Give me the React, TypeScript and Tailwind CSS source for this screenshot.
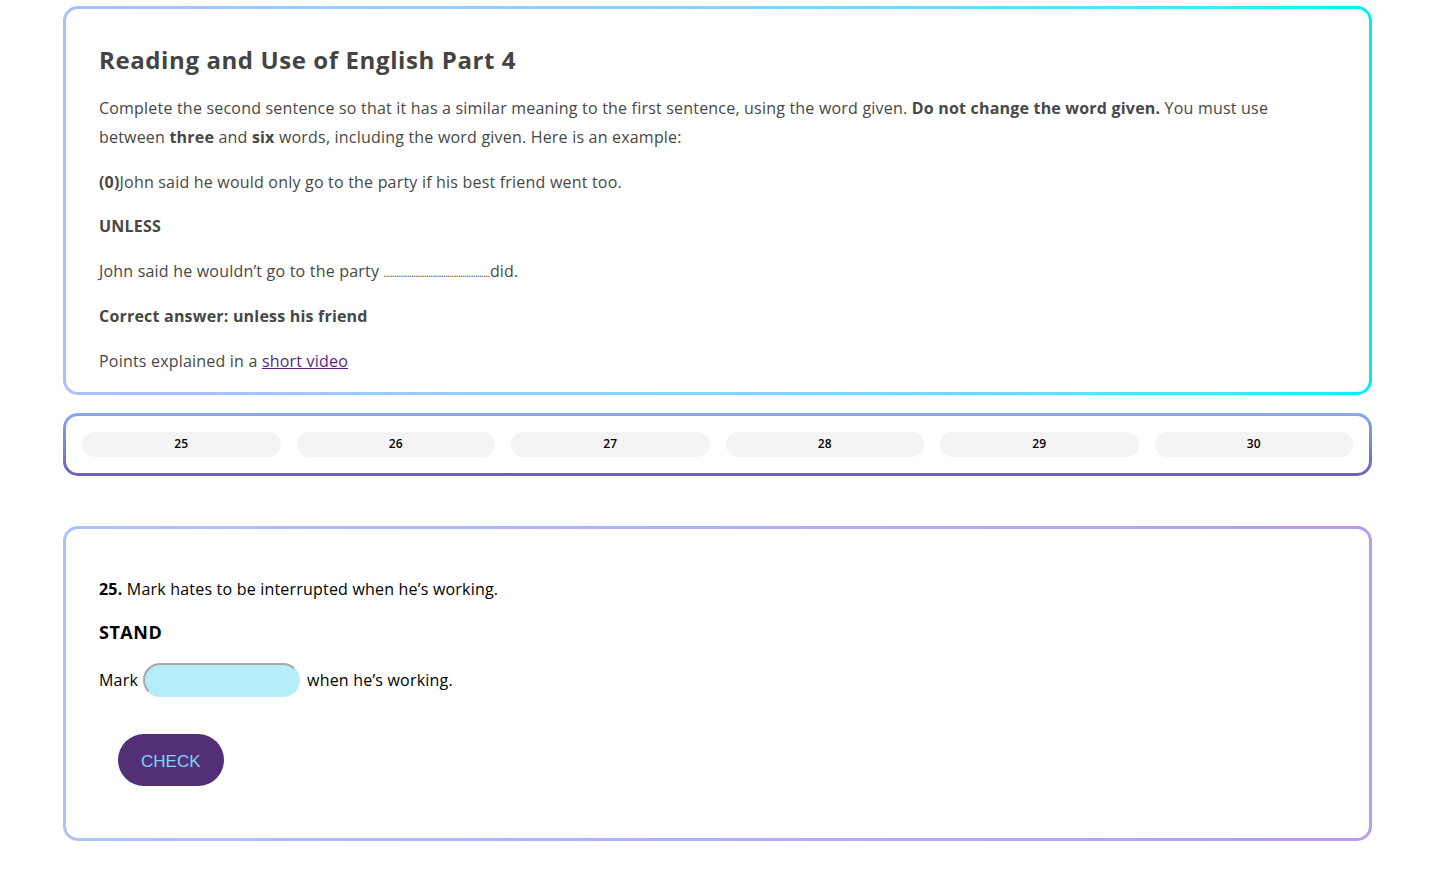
import React from "react";

const font = { fontFamily: '"Open Sans", "Noto Sans", sans-serif' };

export default function App() {
  const nums = [25, 26, 27, 28, 29, 30];
  return (
    <div className="min-h-[880px] bg-white pt-[6px] tracking-[0.2px]" style={font}>
      <div className="ml-[63px] w-[1309px]">
        {/* Box 1 */}
        <div className="rounded-[15px] bg-gradient-to-r from-[#aebffb] to-[#00ebfb] p-[3px]">
          <div className="rounded-[12px] bg-white pl-[33px] pr-[33px] pt-[36px] pb-[16px] text-[#474747]">
            <h2 className="text-[24px] font-bold leading-[29px] tracking-[0.6px] text-[#444444]">
              Reading and Use of English Part 4
            </h2>
            <p className="mt-[20px] text-[16px] leading-[1.8]">
              Complete the second sentence so that it has a similar meaning to the first sentence, using the word given.{" "}
              <b>Do not change the word given.</b> You must use between <b>three</b> and <b>six</b> words, including the word given. Here is an example:
            </p>
            <p className="mt-4 text-[16px] leading-[1.8]">
              <b>(0)</b>John said he would only go to the party if his best friend went too.
            </p>
            <p className="mt-4 text-[16px] leading-[1.8]">
              <b>UNLESS</b>
            </p>
            <p className="mt-4 text-[16px] leading-[1.8]">
              John said he wouldn’t go to the party{" "}
              <span className="text-[10px] tracking-[-0.5px]">..................................................</span>did.
            </p>
            <p className="mt-4 text-[16px] leading-[1.8]">
              <b>Correct answer: unless his friend</b>
            </p>
            <p className="mt-4 text-[16px] leading-[1.8]">
              Points explained in a{" "}
              <a href="#" className="text-[#5a1f8a] underline">
                short video
              </a>
            </p>
          </div>
        </div>

        {/* Box 2 */}
        <div className="mt-[18px] rounded-[15px] bg-gradient-to-b from-[#8aa8f0] to-[#6a63b6] p-[3px]">
          <div className="flex gap-[16px] rounded-[12px] bg-white p-[16px]">
            {nums.map((n) => (
              <div
                key={n}
                className="flex h-[25px] flex-1 items-center justify-center rounded-full bg-[#f4f4f4] text-[12px] font-semibold text-black"
              >
                {n}
              </div>
            ))}
          </div>
        </div>

        {/* Box 3 */}
        <div className="mt-[50px] rounded-[15px] bg-gradient-to-r from-[#aec2fa] to-[#b59df2] p-[3px]">
          <div className="rounded-[12px] bg-white pl-[33px] pr-[33px] pt-[46px] pb-[52px] text-black">
            <p className="text-[16px] leading-[1.8]">
              <b>25.</b> Mark hates to be interrupted when he’s working.
            </p>
            <p className="mt-[13px] text-[18px] font-bold leading-[1.8] tracking-[0.5px]">STAND</p>
            <div className="mt-[14px] flex h-[34px] items-center text-[16px]">
              <span>Mark</span>
              <input
                type="text"
                className="ml-[5px] mr-[7px] h-[34px] w-[157px] rounded-[17px] border-2 border-t-[#a8a8a8] border-l-[#a8a8a8] border-r-[#b5edfb] border-b-[#b5edfb] bg-[#b5edfb] outline-none"
              />
              <span>when he’s working.</span>
            </div>
            <button
              className="ml-[19px] mt-[37px] h-[52px] rounded-full bg-[#522f77] px-[23px] pt-[4px] text-[17px] tracking-normal text-[#80d3f7]"
              style={{ fontFamily: '"Liberation Sans", Arial, sans-serif' }}
            >
              CHECK
            </button>
          </div>
        </div>
      </div>
    </div>
  );
}
